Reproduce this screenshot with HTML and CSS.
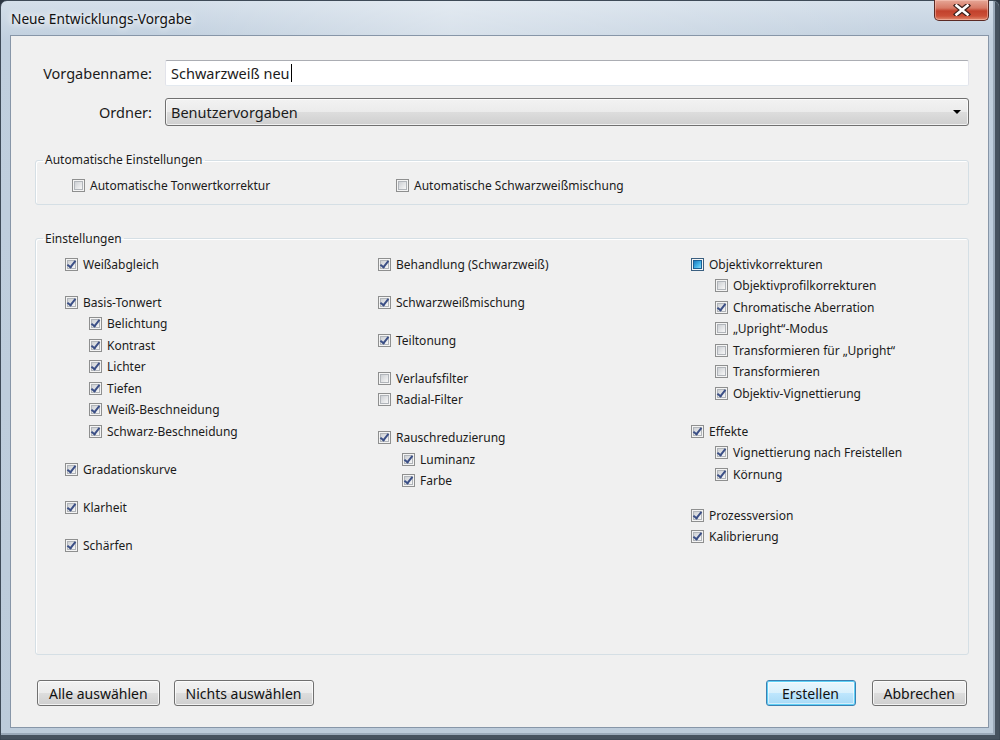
FILE: index.html
```html
<!DOCTYPE html>
<html lang="de">

<head>
    <meta charset="UTF-8">
    <meta name="viewport" content="width=device-width, initial-scale=1.0">
    <title>Neue Entwicklungs-Vorgabe</title>
    <link rel="stylesheet" href="styles.css">
</head>

<body>
    <!-- Fensterrahmen -->
    <div class="window">
        <!-- Titelleiste -->
        <div class="titlebar">
            <span class="title">Neue Entwicklungs-Vorgabe</span>
            <a href="#" class="close">
                <svg width="20" height="12" viewBox="0 0 20 12">
                    <path d="M4.5 1.5 L15.5 10.5 M15.5 1.5 L4.5 10.5" stroke="#3b1f1b" stroke-width="5" stroke-linecap="square" fill="none"/>
                    <path d="M4.5 1.5 L15.5 10.5 M15.5 1.5 L4.5 10.5" stroke="#fff" stroke-width="2.6" stroke-linecap="square" fill="none"/>
                </svg>
            </a>
        </div>

        <!-- Inhalt -->
        <div class="client">
            <div class="form">
                <label class="lbl">Vorgabenname:</label>
                <div class="textbox">Schwarzweiß neu<span class="caret"></span></div>
                <label class="lbl">Ordner:</label>
                <div class="select">Benutzervorgaben<span class="arrow"></span></div>
            </div>

            <!-- Automatische Einstellungen -->
            <fieldset class="group auto">
                <legend>Automatische Einstellungen</legend>
                <div class="autorow">
                    <div class="item"><span class="cb"></span>Automatische Tonwertkorrektur</div>
                    <div class="item"><span class="cb"></span>Automatische Schwarzweißmischung</div>
                </div>
            </fieldset>

            <!-- Einstellungen -->
            <fieldset class="group settings">
                <legend>Einstellungen</legend>
                <div class="cols">
                    <div class="col">
                        <div class="grp">
                            <div class="item"><span class="cb on"></span>Weißabgleich</div>
                        </div>
                        <div class="grp">
                            <div class="item"><span class="cb on"></span>Basis-Tonwert</div>
                            <div class="sub">
                                <div class="item"><span class="cb on"></span>Belichtung</div>
                                <div class="item"><span class="cb on"></span>Kontrast</div>
                                <div class="item"><span class="cb on"></span>Lichter</div>
                                <div class="item"><span class="cb on"></span>Tiefen</div>
                                <div class="item"><span class="cb on"></span>Weiß-Beschneidung</div>
                                <div class="item"><span class="cb on"></span>Schwarz-Beschneidung</div>
                            </div>
                        </div>
                        <div class="grp">
                            <div class="item"><span class="cb on"></span>Gradationskurve</div>
                        </div>
                        <div class="grp">
                            <div class="item"><span class="cb on"></span>Klarheit</div>
                        </div>
                        <div class="grp">
                            <div class="item"><span class="cb on"></span>Schärfen</div>
                        </div>
                    </div>

                    <div class="col">
                        <div class="grp">
                            <div class="item"><span class="cb on"></span>Behandlung (Schwarzweiß)</div>
                        </div>
                        <div class="grp">
                            <div class="item"><span class="cb on"></span>Schwarzweißmischung</div>
                        </div>
                        <div class="grp">
                            <div class="item"><span class="cb on"></span>Teiltonung</div>
                        </div>
                        <div class="grp">
                            <div class="item"><span class="cb"></span>Verlaufsfilter</div>
                            <div class="item"><span class="cb"></span>Radial-Filter</div>
                        </div>
                        <div class="grp">
                            <div class="item"><span class="cb on"></span>Rauschreduzierung</div>
                            <div class="sub">
                                <div class="item"><span class="cb on"></span>Luminanz</div>
                                <div class="item"><span class="cb on"></span>Farbe</div>
                            </div>
                        </div>
                    </div>

                    <div class="col">
                        <div class="grp">
                            <div class="item"><span class="cb mixed"></span>Objektivkorrekturen</div>
                            <div class="sub">
                                <div class="item"><span class="cb"></span>Objektivprofilkorrekturen</div>
                                <div class="item"><span class="cb on"></span>Chromatische Aberration</div>
                                <div class="item"><span class="cb"></span>„Upright“-Modus</div>
                                <div class="item"><span class="cb"></span>Transformieren für „Upright“</div>
                                <div class="item"><span class="cb"></span>Transformieren</div>
                                <div class="item"><span class="cb on"></span>Objektiv-Vignettierung</div>
                            </div>
                        </div>
                        <div class="grp">
                            <div class="item"><span class="cb on"></span>Effekte</div>
                            <div class="sub">
                                <div class="item"><span class="cb on"></span>Vignettierung nach Freistellen</div>
                                <div class="item"><span class="cb on"></span>Körnung</div>
                            </div>
                        </div>
                        <div class="grp wide">
                            <div class="item"><span class="cb on"></span>Prozessversion</div>
                            <div class="item"><span class="cb on"></span>Kalibrierung</div>
                        </div>
                    </div>
                </div>
            </fieldset>

            <!-- Schaltflächen -->
            <div class="footer">
                <div class="btns">
                    <button class="btn">Alle auswählen</button>
                    <button class="btn">Nichts auswählen</button>
                </div>
                <div class="btns right">
                    <button class="btn default">Erstellen</button>
                    <button class="btn">Abbrechen</button>
                </div>
            </div>
        </div>
    </div>
</body>

</html>
```

FILE: styles.css
```css
html,
body {
    margin: 0;
    padding: 0;
    width: 1000px;
    height: 740px;
    overflow: hidden;
}

body {
    font-family: "Noto Sans", "DejaVu Sans", sans-serif;
    color: #1b1b1b;
    background: #2c3642;
}

/* Fensterrahmen */
.window {
    box-sizing: border-box;
    height: 740px;
    padding: 0 10px 11px 9px;
    display: flex;
    flex-direction: column;
    border: 1px solid #3e4a57;
    border-radius: 7px 7px 0 0;
    background:
        linear-gradient(to right, rgba(255, 255, 255, 0) 18%, rgba(255, 255, 255, .35) 45%, rgba(255, 255, 255, .15) 70%, rgba(255, 255, 255, 0) 92%) top / 100% 36px no-repeat,
        linear-gradient(#d4dfea, #c0cfde 40px, #bccbda);
    box-shadow: inset -4px -4px 0 #46525f, inset -6px -6px 0 #9aa9b9;
}

/* Titelleiste */
.titlebar {
    height: 34px;
    display: flex;
    justify-content: space-between;
    align-items: flex-start;
}

.title {
    margin: 8px 0 0 1px;
    font-size: 13.7px;
    color: #111;
    text-shadow: 0 0 6px #fff, 0 0 10px #fff;
}

.close {
    display: flex;
    align-items: center;
    justify-content: center;
    width: 55px;
    height: 21px;
    margin-top: -1px;
    box-sizing: border-box;
    border: 1px solid #5b2a24;
    border-top: 0;
    border-radius: 0 0 5px 5px;
    background: linear-gradient(#e6a797 0, #d77a66 40%, #c2412c 55%, #cb4f37 80%, #e08b70 100%);
    box-shadow: inset 0 0 0 1px rgba(255, 210, 200, .45);
}

/* Inhalt */
.client {
    flex: 1;
    display: flex;
    flex-direction: column;
    padding: 24px 19px 21px 24px;
    background: #f0f0f0;
    border: 1px solid #8796a8;
}

/* Name / Ordner */
.form {
    display: grid;
    grid-template-columns: 117px 1fr;
    grid-template-rows: 26px 28px;
    column-gap: 13px;
    row-gap: 12px;
    align-items: center;
    font-size: 14.5px;
}

.lbl {
    text-align: right;
}

.textbox {
    box-sizing: border-box;
    height: 26px;
    padding: 0 5px;
    display: flex;
    align-items: center;
    background: #fff;
    border: 1px solid #e2e3ea;
    border-top-color: #abadb3;
    border-bottom-color: #e3e9ef;
    border-radius: 2px;
}

.caret {
    display: inline-block;
    width: 1px;
    height: 18px;
    margin-left: 1px;
    background: #000;
}

.select {
    position: relative;
    box-sizing: border-box;
    height: 28px;
    padding: 0 5px;
    display: flex;
    align-items: center;
    border: 1px solid #707070;
    border-radius: 3px;
    background: linear-gradient(#f2f2f2 0, #ebebeb 50%, #dddddd 51%, #cfcfcf 100%);
    box-shadow: inset 0 0 0 1px rgba(255, 255, 255, .7);
}

.arrow {
    position: absolute;
    right: 7px;
    top: 11px;
    border-left: 4px solid transparent;
    border-right: 4px solid transparent;
    border-top: 4px solid #000;
}

/* Gruppenrahmen */
.group {
    margin: 0;
    padding: 0;
    border: 1px solid #d5dfe5;
    border-radius: 3px;
    box-shadow: inset 1px 1px 0 #fff;
    font-size: 12px;
}

.group legend {
    padding: 0 2px;
    margin-left: 7px;
    line-height: 16px;
}

.auto {
    margin-top: 26px;
}

.autorow {
    display: grid;
    grid-template-columns: 324px auto;
    padding: 7px 0 7px 36px;
}

.settings {
    flex: 1;
    margin-top: 26px;
}

.cols {
    display: grid;
    grid-template-columns: 313px 313px 1fr;
    padding: 7px 0 0 29px;
}

.col {
    display: flex;
    flex-direction: column;
    gap: 16.5px;
}

.grp.wide {
    margin-top: 3px;
}

.sub {
    padding-left: 24px;
}

.item {
    display: flex;
    align-items: center;
    gap: 5px;
    height: 21.5px;
    white-space: nowrap;
}

/* Kontrollkaestchen */
.cb {
    position: relative;
    flex: none;
    box-sizing: border-box;
    width: 13px;
    height: 13px;
    border: 1px solid #8e8f8f;
    background: #f4f4f4;
}

.cb::before {
    content: "";
    position: absolute;
    left: 1px;
    top: 1px;
    width: 7px;
    height: 7px;
    border: 1px solid #b1b5ba;
    background: linear-gradient(135deg, #cdd0d4, #f7f7f7);
}

.cb.on::after {
    content: "";
    position: absolute;
    left: 3px;
    top: 0;
    width: 3px;
    height: 7px;
    border-right: 2px solid #3b4f86;
    border-bottom: 2px solid #3b4f86;
    transform: rotate(38deg);
}

.cb.mixed {
    border-color: #3a5f80;
}

.cb.mixed::before {
    border-color: #1b5f93;
    background: linear-gradient(135deg, #1b78bd, #47b7ea 60%, #8cd6f5);
}

/* Schaltflaechen */
.footer {
    display: flex;
    justify-content: space-between;
    margin-top: 25px;
    padding: 0 2px;
}

.btns {
    display: flex;
    gap: 14px;
}

.btns.right {
    gap: 16px;
}

.btn {
    box-sizing: border-box;
    height: 26px;
    min-width: 90px;
    padding: 0 11px;
    font-family: inherit;
    font-size: 14px;
    color: #111;
    border: 1px solid #707070;
    border-radius: 3px;
    background: linear-gradient(#f2f2f2 0, #ebebeb 50%, #dddddd 51%, #cfcfcf 100%);
    box-shadow: inset 0 0 0 1px rgba(255, 255, 255, .75);
}

.btn.default {
    border-color: #3c7fb1;
    background: linear-gradient(#eaf6fd 0, #d9f0fc 50%, #bee6fd 51%, #a7d9f5 100%);
    box-shadow: inset 0 0 0 1px #5ed0f6, inset 0 0 0 2px rgba(255, 255, 255, .5);
}
```
